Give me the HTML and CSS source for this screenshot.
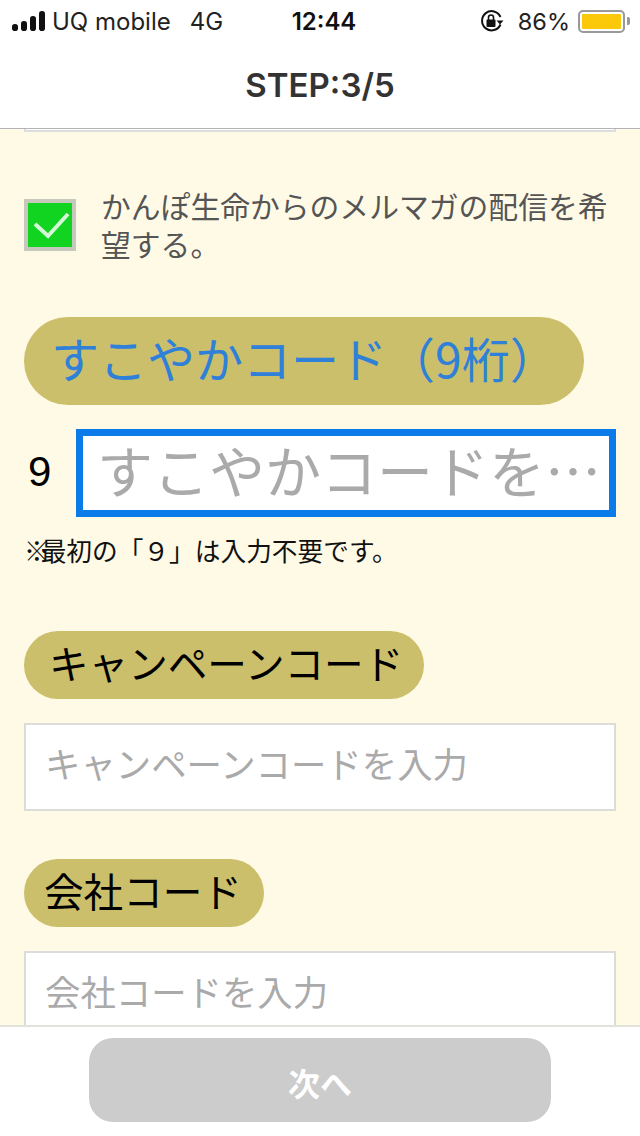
FILE: index.html
```html
<!DOCTYPE html>
<html lang="ja">
<head>
<meta charset="utf-8">
<title>STEP:3/5</title>
<link rel="stylesheet" href="styles.css">
</head>
<body>
<div class="app">
  <header class="header">
    <div class="status">
      <div class="status-left">
        <svg class="signal" viewBox="0 0 33 20" width="33" height="20" aria-hidden="true">
          <rect x="0" y="13" width="6" height="7" rx="2.8"/>
          <rect x="9" y="10" width="6" height="10" rx="2.8"/>
          <rect x="18" y="5" width="6" height="15" rx="2.8"/>
          <rect x="27" y="0" width="6" height="20" rx="2.8"/>
        </svg>
        <span class="carrier">UQ mobile</span>
        <span class="network">4G</span>
      </div>
      <div class="clock">12:44</div>
      <div class="status-right">
        <svg class="lock" viewBox="0 0 24 24" width="24" height="24" aria-hidden="true">
          <path d="M20.5 15.5A9.6 9.6 0 1 1 20.5 8" fill="none" stroke="#111" stroke-width="2"/>
          <path d="M16.5 11.5h7l-3.5 4z" fill="#111"/>
          <rect x="6.5" y="10.5" width="9" height="7.5" rx="1" fill="#111"/>
          <path d="M8.5 11V8.5a2.5 2.5 0 0 1 5 0V11" fill="none" stroke="#111" stroke-width="1.6"/>
        </svg>
        <span class="percent">86%</span>
        <div class="battery"><div class="battery-fill"></div></div>
        <div class="battery-tip"></div>
      </div>
    </div>
    <h1 class="title">STEP:3/5</h1>
  </header>

  <main class="content">
    <div class="stub"></div>
    <div class="check-row">
      <div class="checkbox">
        <svg viewBox="0 0 44 44" width="44" height="44" aria-hidden="true">
          <path d="M7 21l13 12L40 11" fill="none" stroke="#d6f7d6" stroke-width="4"/>
        </svg>
      </div>
      <p class="check-label">かんぽ生命からのメルマガの配信を希望する。</p>
    </div>

    <div class="pill pill-primary">すこやかコード（9桁）</div>
    <div class="code-row">
      <span class="prefix">9</span>
      <input class="field field-focus" type="text" placeholder="すこやかコードを入力">
    </div>
    <p class="note"><span class="mark">※</span>最初の「９」は入力不要です。</p>

    <div class="pill pill-campaign">キャンペーンコード</div>
    <input class="field field-plain" type="text" placeholder="キャンペーンコードを入力">

    <div class="pill pill-company">会社コード</div>
    <input class="field field-plain" type="text" placeholder="会社コードを入力">
  </main>

  <footer class="footer">
    <button class="next" type="button">次へ</button>
  </footer>
</div>
</body>
</html>
```
FILE: styles.css
```css
* { box-sizing: border-box; }
html, body { margin: 0; padding: 0; }
body {
  font-family: "Noto Sans CJK JP", "Noto Sans", sans-serif;
  background: #fff;
}
.app {
  width: 640px;
  height: 1136px;
  display: flex;
  flex-direction: column;
  overflow: hidden;
}
.header {
  height: 129px;
  flex: none;
  background: #fff;
  border-bottom: 1px solid #b4b4b8;
}
.status {
  height: 42px;
  display: grid;
  grid-template-columns: 1fr auto 1fr;
  align-items: center;
  padding: 0 10px 0 12px;
  font-family: Inter, "Liberation Sans", sans-serif;
  font-size: 24px;
  color: #222;
}
.status-left { display: flex; align-items: center; }
.signal { fill: #111; margin-right: 7px; }
.carrier { margin-right: 19px; }
.clock { font-weight: 600; color: #111; margin-left: 6px; }
.status-right { display: flex; align-items: center; justify-content: flex-end; }
.lock { margin-right: 14px; }
.percent { margin-right: 8px; font-size: 23.5px; }
.battery {
  width: 47px;
  height: 23px;
  border: 2px solid #999;
  border-radius: 5px;
  padding: 2px;
}
.battery-fill { width: 100%; height: 100%; background: #fcc80a; border-radius: 1px; }
.battery-tip {
  width: 3px;
  height: 8px;
  margin-left: 2px;
  background: #999;
  border-radius: 0 2px 2px 0;
}
.title {
  margin: 0;
  height: 86px;
  display: flex;
  align-items: center;
  justify-content: center;
  font-family: Inter, "Liberation Sans", sans-serif;
  font-size: 33px;
  font-weight: 600;
  color: #333;
}
.content {
  flex: 1;
  min-height: 0;
  overflow: hidden;
  background: #fffae6;
  padding: 0 24px;
}
.stub {
  height: 3px;
  background: #fff;
  border: 2px solid #ddd;
  border-top: 0;
}
.check-row {
  display: flex;
  gap: 25px;
  margin-top: 54px;
}
.checkbox {
  width: 52px;
  height: 52px;
  flex: none;
  margin-top: 13px;
  background: #10d420;
  border: 4px solid #c6c8bc;
}
.checkbox svg { display: block; }
.check-label {
  margin: 0;
  font-size: 29.8px;
  line-height: 38px;
  color: #555;
}
.pill {
  border-radius: 999px;
  background: #cbbf6b;
  display: flex;
  align-items: center;
  color: #000;
  font-size: 39.6px;
  white-space: nowrap;
  padding-bottom: 8px;
}
.pill-primary {
  width: 560px;
  height: 88px;
  margin-top: 55px;
  padding-left: 27px;
  font-size: 48px;
  color: #2f80d8;
}
.pill-campaign { width: 400px; height: 68px; margin-top: 65px; padding-left: 25px; margin-bottom: 24px; }
.pill-company { width: 240px; height: 68px; margin-top: 48px; padding-left: 20px; margin-bottom: 24px; }
.code-row {
  display: flex;
  align-items: center;
  margin-top: 24px;
}
.prefix {
  width: 52px;
  padding: 0 0 2px 4px;
  flex: none;
  font-family: "Liberation Sans", sans-serif;
  font-size: 42px;
  color: #000;
}
.field {
  display: block;
  border-radius: 0;
  outline: 0;
  background: #fff;
  font-family: inherit;
  text-overflow: ellipsis;
}
.field::placeholder { color: #aaa; opacity: 1; }
.field-focus {
  width: 540px;
  height: 88px;
  border: 7px solid #0a7be8;
  padding: 0 6px 10px 14px;
  font-size: 56px;
}
.field-plain {
  width: 592px;
  height: 88px;
  border: 2px solid #dcdcd8;
  padding: 0 20px 10px 19px;
  font-size: 35.4px;
}
.note {
  margin: 17px 0 0;
  font-size: 25.7px;
  line-height: 32px;
  color: #111;
  white-space: nowrap;
}
.mark { letter-spacing: -9px; }
.footer {
  height: 111px;
  flex: none;
  background: #fff;
  border-top: 2px solid #e2e2dc;
  display: flex;
  justify-content: center;
  padding-top: 11px;
}
.next {
  width: 462px;
  height: 84px;
  border: 0;
  border-radius: 24px;
  background: #ccc;
  color: #fff;
  font-family: inherit;
  font-size: 32px;
  font-weight: 700;
  padding-top: 4px;
}
```
